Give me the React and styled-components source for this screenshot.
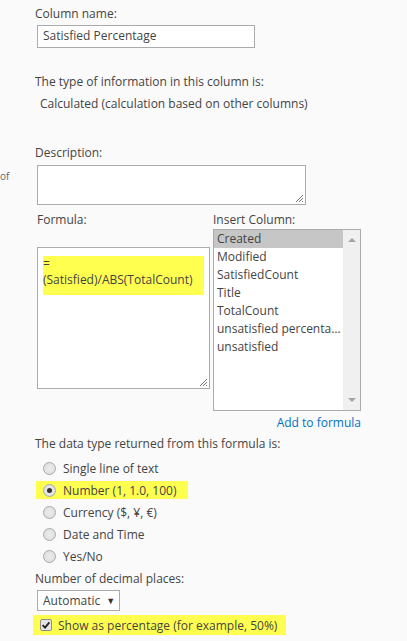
import styled, { createGlobalStyle } from 'styled-components';

const GlobalStyle = createGlobalStyle`
  body {
    margin: 0;
    background: #fafafa;
    font-family: 'Open Sans', 'Noto Sans', sans-serif;
    font-size: 12px;
    color: #444;
  }
`;

const Page = styled.div`
  display: grid;
  grid-template-columns: 35px 1fr;
  width: 407px;
  height: 641px;
  overflow: hidden;
`;

const SideNote = styled.div`
  padding-top: 170px;
  font-size: 10px;
  color: #666;
  line-height: 12px;
`;

const Main = styled.div`
  display: flex;
  flex-direction: column;
  padding-top: 6px;
`;

const Label = styled.div`
  line-height: 16px;
  white-space: nowrap;
  margin-top: ${p => p.$top || 0}px;
  padding-left: ${p => p.$indent || 0}px;
`;

const TextInput = styled.div`
  box-sizing: border-box;
  width: 218px;
  height: 23px;
  margin: 3px 0 0 2px;
  border: 1px solid #ababab;
  background: #fff;
  padding-left: 5px;
  line-height: 20px;
  color: #444;
`;

const Area = styled.div`
  position: relative;
  box-sizing: border-box;
  width: ${p => p.$w}px;
  height: ${p => p.$h}px;
  margin: ${p => p.$top || 0}px 0 0 ${p => (p.$flush ? 0 : 2)}px;
  border: 1px solid #ababab;
  background: #fff;
  padding: 8px 5px;
`;

const Grip = styled.svg`
  position: absolute;
  right: 1px;
  bottom: 1px;
`;

const Highlight = styled.div`
  background: #ffff50;
  line-height: 16px;
  padding-bottom: 7px;
  white-space: nowrap;
`;

const Columns = styled.div`
  display: flex;
  margin-top: 7px;
`;

const FormulaCol = styled.div`
  width: 176px;
  display: flex;
  flex-direction: column;
  padding-left: 2px;
`;

const InsertCol = styled.div`
  display: flex;
  flex-direction: column;
`;

const ListBox = styled.div`
  box-sizing: border-box;
  width: 148px;
  height: 182px;
  margin-top: 1px;
  border: 1px solid #ababab;
  background: #fff;
  display: flex;
`;

const Items = styled.div`
  flex: 1;
  min-width: 0;
`;

const Item = styled.div`
  line-height: 18px;
  padding-left: 3px;
  white-space: nowrap;
  overflow: hidden;
  text-overflow: ellipsis;
  background: ${p => (p.$selected ? '#c6c6c6' : 'transparent')};
`;

const ScrollBar = styled.div`
  width: 17px;
  background: #f0f0f0;
  display: flex;
  flex-direction: column;
  justify-content: space-between;
  align-items: center;
  padding: 8px 0;
`;

const Arrow = styled.div`
  width: 0;
  height: 0;
  border-left: 4px solid transparent;
  border-right: 4px solid transparent;
  ${p => (p.$down ? 'border-top: 4px solid #a3a3a3;' : 'border-bottom: 4px solid #a3a3a3;')}
`;

const AddLink = styled.a`
  align-self: flex-end;
  color: #0072c6;
  line-height: 16px;
  margin-top: 4px;
  text-decoration: none;
`;

const Radios = styled.div`
  display: flex;
  flex-direction: column;
  margin-top: 7px;
  gap: 4px;
`;

const RadioRow = styled.div`
  display: flex;
  align-items: center;
  gap: 7px;
  height: 18px;
  width: ${p => (p.$marked ? '145px' : 'auto')};
  padding-left: 7px;
  margin-left: 1px;
  white-space: nowrap;
  background: ${p => (p.$marked ? '#ffff50' : 'transparent')};
`;

const RadioDot = styled.span`
  box-sizing: border-box;
  width: 13px;
  height: 13px;
  border-radius: 50%;
  border: 1px solid #a9a9a9;
  background: radial-gradient(circle, #ececec 0%, #dcdcdc 100%);
  display: flex;
  align-items: center;
  justify-content: center;
  &::after {
    content: '';
    width: 5px;
    height: 5px;
    border-radius: 50%;
    background: ${p => (p.$checked ? '#333' : 'transparent')};
  }
`;

const Select = styled.div`
  box-sizing: border-box;
  width: 83px;
  height: 21px;
  margin: 3px 0 0 2px;
  border: 1px solid #ababab;
  background: #fff;
  padding-left: 5px;
  line-height: 19px;
  display: flex;
  gap: 6px;
`;

const Caret = styled.span`
  font-size: 9px;
  color: #333;
`;

const CheckRow = styled.div`
  display: flex;
  align-items: center;
  gap: 6px;
  width: 246px;
  height: 20px;
  margin-top: 4px;
  margin-left: -2px;
  padding-left: 7px;
  white-space: nowrap;
  background: #ffff50;
`;

const radios = [
  { label: 'Single line of text' },
  { label: 'Number (1, 1.0, 100)', checked: true },
  { label: 'Currency ($, ¥, €)' },
  { label: 'Date and Time' },
  { label: 'Yes/No' },
];

const columns = [
  'Created',
  'Modified',
  'SatisfiedCount',
  'Title',
  'TotalCount',
  'unsatisfied percentage',
  'unsatisfied',
];

function ResizeGrip() {
  return (
    <Grip width="9" height="9" viewBox="0 0 9 9">
      <path d="M8 1 L1 8 M8 4 L4 8 M8 7 L7 8" stroke="#777" strokeWidth="1" />
    </Grip>
  );
}

export default function App() {
  return (
    <Page>
      <GlobalStyle />
      <SideNote>of</SideNote>
      <Main>
        <Label>Column name:</Label>
        <TextInput>Satisfied Percentage</TextInput>

        <Label $top={26}>The type of information in this column is:</Label>
        <Label $top={6} $indent={5}>Calculated (calculation based on other columns)</Label>

        <Label $top={33}>Description:</Label>
        <Area $w={269} $h={40} $top={4}>
          <ResizeGrip />
        </Area>

        <Columns>
          <FormulaCol>
            <Label>Formula:</Label>
            <Area $w={173} $h={142} $top={19} $flush>
              <Highlight>
                =<br />(Satisfied)/ABS(TotalCount)
              </Highlight>
              <ResizeGrip />
            </Area>
          </FormulaCol>
          <InsertCol>
            <Label>Insert Column:</Label>
            <ListBox>
              <Items>
                {columns.map((c, i) => (
                  <Item key={c} $selected={i === 0}>{c}</Item>
                ))}
              </Items>
              <ScrollBar>
                <Arrow />
                <Arrow $down />
              </ScrollBar>
            </ListBox>
            <AddLink href="#">Add to formula</AddLink>
          </InsertCol>
        </Columns>

        <Label $top={5}>The data type returned from this formula is:</Label>
        <Radios>
          {radios.map(r => (
            <RadioRow key={r.label} $marked={r.checked}>
              <RadioDot $checked={r.checked} />
              {r.label}
            </RadioRow>
          ))}
        </Radios>

        <Label $top={6}>Number of decimal places:</Label>
        <Select>
          Automatic <Caret>▼</Caret>
        </Select>
        <CheckRow>
          <svg width="12" height="12" viewBox="0 0 12 12">
            <rect x="0.5" y="0.5" width="11" height="11" rx="1.5" fill="#e4e4e4" stroke="#8f8f8f" />
            <path d="M2.6 6.2 L5 8.6 L9.4 3.4" fill="none" stroke="#222" strokeWidth="1.8" />
          </svg>
          Show as percentage (for example, 50%)
        </CheckRow>
      </Main>
    </Page>
  );
}
